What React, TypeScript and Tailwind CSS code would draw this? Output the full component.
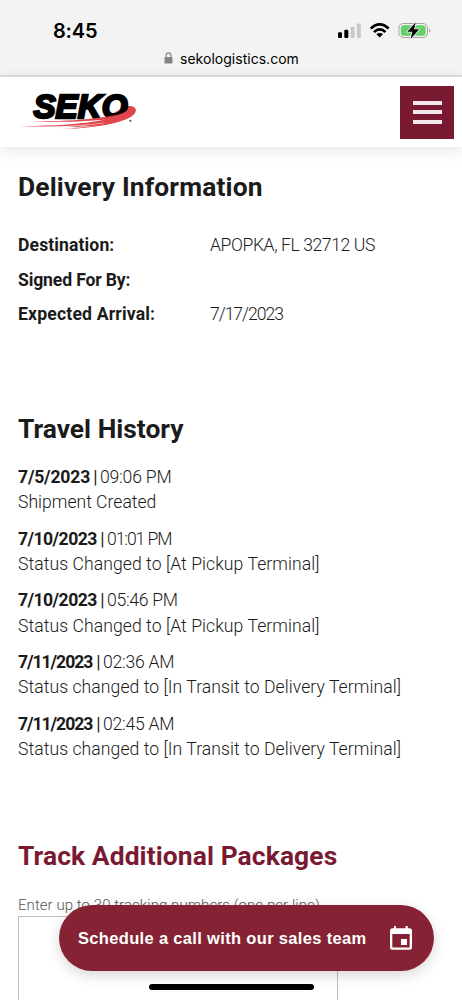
import React from 'react';

interface DetailRowProps {
  label: string;
  value?: string;
  labelClass: string;
  valueClass?: string;
}

const DetailRow: React.FC<DetailRowProps> = ({ label, value, labelClass, valueClass = '' }) => (
  <div className="flex h-[34.4px] items-center whitespace-nowrap">
    <dt className={`w-[192px] shrink-0 font-bold ${labelClass}`}>{label}</dt>
    <dd className={`font-light ${valueClass}`}>{value}</dd>
  </div>
);

const details: DetailRowProps[] = [
  { label: 'Destination:', value: 'APOPKA, FL 32712 US', labelClass: 'tracking-[0.1px]', valueClass: 'tracking-[-0.42px]' },
  { label: 'Signed For By:', labelClass: 'tracking-[-0.15px]' },
  { label: 'Expected Arrival:', value: '7/17/2023', labelClass: 'tracking-[0.17px]', valueClass: 'tracking-[-1.05px]' },
];

const history = [
  { date: '7/5/2023', time: '09:06 PM', status: 'Shipment Created', dateClass: 'w-[73px] tracking-[-0.2px]', timeClass: 'tracking-[-0.2px]', statusClass: '' },
  { date: '7/10/2023', time: '01:01 PM', status: 'Status Changed to [At Pickup Terminal]', dateClass: 'w-[80px] tracking-[-0.55px]', timeClass: 'tracking-[-1.1px]', statusClass: 'tracking-[0.06px]' },
  { date: '7/10/2023', time: '05:46 PM', status: 'Status Changed to [At Pickup Terminal]', dateClass: 'w-[80px] tracking-[-0.55px]', timeClass: 'tracking-[-0.3px]', statusClass: 'tracking-[0.06px]' },
  { date: '7/11/2023', time: '02:36 AM', status: 'Status changed to [In Transit to Delivery Terminal]', dateClass: 'w-[76px] tracking-[-1.05px]', timeClass: 'tracking-[-0.25px]', statusClass: 'tracking-[0.06px]' },
  { date: '7/11/2023', time: '02:45 AM', status: 'Status changed to [In Transit to Delivery Terminal]', dateClass: 'w-[76px] tracking-[-1.05px]', timeClass: 'tracking-[-0.25px]', statusClass: 'tracking-[0.06px]' },
];

const StatusIcons = () => (
  <svg className="h-[20px] w-[96px]" viewBox="336 20 96 20" fill="none">
    <rect x="338" y="32.3" width="4" height="5.7" rx="1.1" fill="#000" />
    <rect x="344.3" y="29.8" width="4" height="8.2" rx="1.1" fill="#000" />
    <rect x="350.6" y="26.7" width="4" height="11.3" rx="1.1" fill="#c9c9c9" />
    <rect x="356.9" y="23.5" width="4" height="14.5" rx="1.1" fill="#c9c9c9" />
    <path d="M370.8 28.6C375.9 22.9 383.5 22.9 388.6 28.6" stroke="#000" strokeWidth="2.8" />
    <path d="M374 32.1C377.4 28.5 382 28.5 385.4 32.1" stroke="#000" strokeWidth="2.7" />
    <path d="M379.7 37.6L376.4 34.2C378.3 32.5 381.1 32.5 383 34.2Z" fill="#000" />
    <rect x="398.9" y="23.5" width="28.6" height="14" rx="4.4" stroke="#a3a3a3" strokeWidth="1" />
    <rect x="400.8" y="25.3" width="24.8" height="10.4" rx="2.8" fill="#65cf69" />
    <path d="M429 28.4C430.9 29.2 430.9 31.8 429 32.6Z" fill="#a3a3a3" />
    <path d="M415.7 22.2L407.4 31.8H412.3L410.7 39L419.1 29.3H414.1Z" fill="#000" stroke="#f3f3f3" strokeWidth="1.6" paintOrder="stroke" strokeLinejoin="round" />
  </svg>
);

const LockIcon = () => (
  <svg className="h-[12px] w-[9px]" viewBox="0 0 9 12" fill="none">
    <path d="M2.1 6V3.4C2.1 0.1 6.9 0.1 6.9 3.4V6" stroke="#858585" strokeWidth="1.2" />
    <rect x="0.5" y="5" width="8" height="6.6" rx="1.2" fill="#858585" />
  </svg>
);

const Logo = () => (
  <svg className="h-[60px] w-[120px]" viewBox="18 82 120 60">
    <path d="M127 105.8C134 105.5 137.5 108.5 135 113C131 119 116 123 104 125L110 115Z" fill="#e0464b" />
    <text x="33.5" y="118.4" textLength="94" lengthAdjust="spacingAndGlyphs" fill="#000" stroke="#000" strokeWidth="2.4" className="font-['Liberation_Sans'] text-[34px] font-bold italic">SEKO</text>
    {/* swoosh passing under the letters */}
    <path d="M135.4 109.5C136 114 129 118.5 119 121.5C105 125.5 84 127.2 66 126.8C84 125.8 98 124.3 106 122.6C76 126.8 45 127 20 125.9C52 126 84 124 106 119.4C92 120.8 62 122.7 32 121.2C62 121.6 84 120 100 117.6C113 116 127 114.5 129 107Z" fill="#e0464b" />
    <path d="M60 128.5C88 127.8 112 124 130 116.2C114 125 88 129.3 60 128.5Z" fill="#e0464b" />
    <circle cx="130.3" cy="120.8" r="1.1" fill="#555" />
  </svg>
);

const CalendarIcon = () => (
  <svg className="mb-[2px] h-[25px] w-[23px]" viewBox="388 924 23 25">
    <path fillRule="evenodd" d="M393 925H395V927.3H404.6V925H406.7V927.3H408.5Q411 927.3 411 929.8V946.2Q411 948.7 408.5 948.7H391.5Q389 948.7 389 946.2V929.8Q389 927.3 391.5 927.3H393ZM391.3 933V946.5H408.7V933Z" fill="#fff" />
    <rect x="400" y="938" width="6" height="6" fill="#fff" />
  </svg>
);

export default function App() {
  return (
    <div className="relative flex h-[1000px] w-[462px] flex-col overflow-hidden bg-white font-['Roboto',sans-serif] text-[17.6px] text-[#1b1b1b]">
      <div className="flex h-[77px] shrink-0 flex-col border-b-2 border-[#dedede] bg-[#f3f3f3] font-['Inter',sans-serif] text-black">
        <div className="flex h-[45px] items-end justify-between pr-[30px] pl-[53px]">
          <span className="text-[20px] leading-[28px] font-semibold tracking-[-0.2px]">8:45</span>
          <div className="pb-[5px]"><StatusIcons /></div>
        </div>
        <div className="flex h-[26px] items-center pl-[164px]">
          <LockIcon />
          <span className="ml-[7px] text-[14px] tracking-[0.02px]">sekologistics.com</span>
        </div>
      </div>

      <header className="flex h-[70px] shrink-0 items-center justify-between pr-[8px] pl-[18px] shadow-[0_3px_14px_rgba(0,0,0,0.11)]">
        <Logo />
        <button className="flex h-[53px] w-[54px] flex-col items-center justify-center gap-[5.5px] bg-[#7a1a32]">
          <span className="h-[4px] w-[29px] bg-[#f5e9ed]" />
          <span className="h-[4px] w-[29px] bg-[#f5e9ed]" />
          <span className="h-[4px] w-[29px] bg-[#f5e9ed]" />
        </button>
      </header>

      <main className="px-[18px] whitespace-nowrap">
        <h2 className="mt-[24px] text-[26.4px] leading-[32px] font-bold tracking-[0.15px]">Delivery Information</h2>
        <dl className="mt-[25.2px]">
          {details.map(row => (
            <DetailRow key={row.label} {...row} />
          ))}
        </dl>

        <h2 className="mt-[81.8px] text-[26.4px] leading-[32px] font-bold">Travel History</h2>
        <ul className="mt-[20px]">
          {history.map((item, i) => (
            <li key={i} className="h-[61.6px] leading-[25.2px]">
              <div className="flex">
                <span className={`font-bold ${item.dateClass}`}>{item.date}</span>
                <span className="w-[9px] text-center">|</span>
                <span className={`font-light ${item.timeClass}`}>{item.time}</span>
              </div>
              <span className={`block font-light ${item.statusClass}`}>{item.status}</span>
            </li>
          ))}
        </ul>

        <h2 className="mt-[67px] text-[26.4px] leading-[32px] font-bold tracking-[0.1px] text-[#7a1a32]">Track Additional Packages</h2>
        <p className="mt-[23px] text-[15px] leading-[20px] font-light tracking-[0.06px] text-[#555]">Enter up to 30 tracking numbers (one per line)</p>
        <div className="mt-[1px] h-[120px] w-[320px] border border-[#bdbdbd]" />
      </main>

      <button className="absolute top-[905px] left-[59px] flex h-[66px] w-[375px] items-center justify-between rounded-full bg-[#852233] pr-[22px] pl-[19px] text-white shadow-[0_4px_14px_rgba(0,0,0,0.16)]">
        <span className="font-['Liberation_Sans'] text-[16.5px] font-bold tracking-[0.33px]">Schedule a call with our sales team</span>
        <CalendarIcon />
      </button>
      <div className="absolute top-[984px] left-[149px] h-[6px] w-[165px] rounded-full bg-black" />
    </div>
  );
}
